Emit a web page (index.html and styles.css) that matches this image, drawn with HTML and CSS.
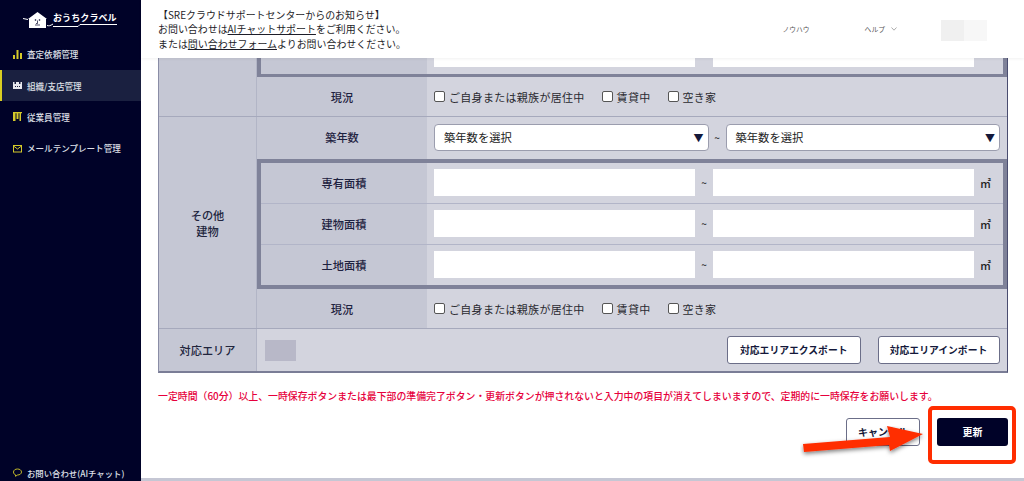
FILE: index.html
```html
<!DOCTYPE html>
<html lang="ja">
<head>
<meta charset="utf-8">
<title>組織/支店管理</title>
<link rel="stylesheet" href="styles.css">
</head>
<body>
<div class="app">
  <aside class="sidebar">
    <div class="logo">
      <svg class="logo-house" width="31" height="18" viewBox="0 0 31 18"><path d="M0 7.500 5 8.500M24 14.500C26 15 27 15 30 13" stroke="#fff" stroke-width="1" fill="none"/><path d="M5 8 14.500 1 24 8H23V17H6V8z" fill="#fff"/><circle cx="12.500" cy="9" r=".8" fill="#000228"/><circle cx="16.500" cy="9" r=".8" fill="#000228"/><path d="M14.500 9.500V12.500H13M12 14H17" stroke="#000228" stroke-width=".7" fill="none"/></svg>
      <div class="logo-word">
        <span class="logo-text">おうちクラベル</span>
        <svg class="logo-line" width="64" height="4" viewBox="0 0 64 4"><path d="M0 3.500H25L27 1.500H64" stroke="#fff" stroke-width="1" fill="none"/></svg>
      </div>
    </div>
    <nav class="nav">
      <a class="nav-item"><svg class="nav-icon" width="9" height="9" viewBox="0 0 9 9"><path d="M0 5h2v4H0zM3.500 0h2v9h-2zM7 3h2v6H7z" fill="#d4c92a"/></svg>査定依頼管理</a>
      <a class="nav-item active"><svg class="nav-icon" width="9" height="9" viewBox="0 0 9 9"><path d="M0 1h1.500v2H3V1h3v2h1.500V1H9v7H0z" fill="#e8e8ee"/><path d="M2 5h1v1H2zM4 5h1v1H4zM6 5h1v1H6z" fill="#1a2040"/></svg>組織/支店管理</a>
      <a class="nav-item"><svg class="nav-icon" width="9" height="9" viewBox="0 0 9 9"><path d="M0 0h9v1.200H8V9H6.500V1.200h-1V7H3.500V1.200h-1V9H0z" fill="#d4c92a"/></svg>従業員管理</a>
      <a class="nav-item"><svg class="nav-icon" width="9" height="9" viewBox="0 0 9 9"><rect x=".5" y="1.500" width="8" height="6.500" fill="none" stroke="#d4c92a"/><path d="M.5 2 4.500 5 8.500 2" fill="none" stroke="#d4c92a"/></svg>メールテンプレート管理</a>
    </nav>
    <a class="nav-chat"><svg class="nav-icon" width="9" height="9" viewBox="0 0 9 9"><path d="M4.500 1C2.300 1 .5 2.200 .5 4s1 2.500 2 2.800L2.500 8.300 4.500 7c2.200 0 4-1.200 4-3S6.700 1 4.500 1z" fill="none" stroke="#d4c92a" stroke-width=".9"/></svg>お問い合わせ(AIチャット)</a>
  </aside>

  <div class="content">
    <header class="topbar">
      <div class="notice">
        <p>【SREクラウドサポートセンターからのお知らせ】</p>
        <p>お問い合わせは<u>AIチャットサポート</u>をご利用ください。</p>
        <p>または<u>問い合わせフォーム</u>よりお問い合わせください。</p>
      </div>
      <div class="topnav">
        <span class="topnav-know">ノウハウ</span>
        <span class="topnav-help">ヘルプ<svg width="6" height="4" viewBox="0 0 6 4"><path d="M.5.500 3 3.200 5.500.500" fill="none" stroke="#888" stroke-width=".7"/></svg></span>
        <span class="blur-user"></span>
      </div>
    </header>

    <main class="main">
      <div class="table">
        <section class="group">
          <div class="group-head"></div>
          <div class="group-body">
            <div class="nest nest-cut">
              <div class="row row-cut"><div class="label"></div><div class="value"><span class="field"></span><span class="tilde"></span><span class="field"></span><span class="unit"></span></div></div>
            </div>
            <div class="row row-status">
              <div class="label">現況</div>
              <div class="value checks">
                <label class="check"><i class="box"></i>ご自身または親族が居住中</label>
                <label class="check"><i class="box"></i>賃貸中</label>
                <label class="check"><i class="box"></i>空き家</label>
              </div>
            </div>
          </div>
        </section>

        <section class="group">
          <div class="group-head">その他<br>建物</div>
          <div class="group-body">
            <div class="row row-age">
              <div class="label">築年数</div>
              <div class="value selects">
                <div class="select">築年数を選択<span class="caret">▼</span></div>
                <span class="tilde-s">~</span>
                <div class="select">築年数を選択<span class="caret">▼</span></div>
              </div>
            </div>
            <div class="nest">
              <div class="row row-area">
                <div class="label">専有面積</div>
                <div class="value"><span class="field"></span><span class="tilde">~</span><span class="field"></span><span class="unit">㎡</span></div>
              </div>
              <div class="row row-area">
                <div class="label">建物面積</div>
                <div class="value"><span class="field"></span><span class="tilde">~</span><span class="field"></span><span class="unit">㎡</span></div>
              </div>
              <div class="row row-area">
                <div class="label">土地面積</div>
                <div class="value"><span class="field"></span><span class="tilde">~</span><span class="field"></span><span class="unit">㎡</span></div>
              </div>
            </div>
            <div class="row row-status2">
              <div class="label">現況</div>
              <div class="value checks">
                <label class="check"><i class="box"></i>ご自身または親族が居住中</label>
                <label class="check"><i class="box"></i>賃貸中</label>
                <label class="check"><i class="box"></i>空き家</label>
              </div>
            </div>
          </div>
        </section>

        <section class="area-row">
          <div class="group-head">対応エリア</div>
          <div class="area-value">
            <span class="blur-area"></span>
            <div class="area-actions">
              <button class="btn-outline">対応エリアエクスポート</button>
              <button class="btn-outline">対応エリアインポート</button>
            </div>
          </div>
        </section>
      </div>

      <p class="warning">一定時間（60分）以上、一時保存ボタンまたは最下部の準備完了ボタン・更新ボタンが押されないと入力中の項目が消えてしまいますので、定期的に一時保存をお願いします。</p>

      <div class="actions">
        <button class="btn-action btn-cancel">キャンセル</button>
        <button class="btn-action btn-update">更新</button>
      </div>
    </main>
    <div class="foot-line"></div>
  </div>

  <div class="callout-box"></div>
  <svg class="callout-arrow" width="130" height="40" viewBox="0 0 130 40"><defs><filter id="s" x="-10%" y="-20%" width="120%" height="160%"><feDropShadow dx="0" dy="2" stdDeviation="2" flood-color="#000" flood-opacity=".5"/></filter></defs><path d="M3 18 90 11 87 0 123 8 90 25 89 19 4 26z" fill="#ff2d00" filter="url(#s)"/></svg>
</div>
</body>
</html>
```

FILE: styles.css
```css
* { box-sizing: border-box; }
html, body { margin: 0; padding: 0; height: 481px; overflow: hidden; background: #fff; }
body { font-family: "Noto Sans CJK JP", "Noto Sans", sans-serif; color: #14183a; }
p { margin: 0; }
.app { position: relative; display: flex; width: 1024px; height: 481px; overflow: hidden; }

/* sidebar */
.sidebar { width: 141px; flex: none; background: #000228; color: #dfe0e8; display: flex; flex-direction: column; }
.logo { display: flex; align-items: flex-start; height: 38.750px; padding: 11px 0 0 23px; }
.logo-word { display: flex; flex-direction: column; margin-top: 2px; margin-left: -1px; }
.logo-text { font-size: 9px; line-height: 10px; font-weight: 700; color: #fff; letter-spacing: .1px; }
.logo-line { display: block; margin-top: 0; }
.nav { display: flex; flex-direction: column; }
.nav-item { height: 31.250px; display: flex; align-items: center; gap: 5px; padding-left: 13px; font-size: 8.550px; font-weight: 500; }
.nav-item.active { background: #1a2040; border-left: 2px solid #d9cd22; padding-left: 11px; }
.nav-icon { flex: none; }
.nav-chat { margin-top: auto; height: 17px; display: flex; align-items: center; gap: 5px; padding-left: 13px; font-size: 8.400px; font-weight: 500; }

/* top */
.content { flex: 1; min-width: 0; display: flex; flex-direction: column; }
.topbar { height: 58px; flex: none; background: #fff; display: flex; justify-content: space-between; position: relative; z-index: 2; box-shadow: 0 1px 3px rgba(0,0,0,.06); }
.notice { padding: 7.500px 0 0 17px; font-size: 9.950px; line-height: 14.700px; color: #1d1d28; }
.topnav { display: flex; align-items: flex-start; padding: 20px 37px 0 0; font-size: 6.800px; color: #555; }
.topnav-know { line-height: 18px; margin-right: 55px; }
.topnav-help { line-height: 18px; margin-right: 44px; display: flex; align-items: center; gap: 6px; }
.blur-user { width: 46px; height: 21px; background: linear-gradient(90deg, #f0f0f0 50%, #f7f7f7 50%); }

/* table */
.main { flex: 1; min-height: 0; padding-left: 17px; }
.table { width: 849.500px; border-left: 1px solid #8a8da6; border-right: 1px solid #4a4d70; border-bottom: 2px solid #7a7d96; }
.group { display: flex; border-bottom: 1.500px solid #a6a9bc; }
.group-head { width: 98px; flex: none; background: #c5c7d4; border-right: 1px solid #b2b5c6; display: flex; align-items: center; justify-content: center; text-align: center; font-size: 11.200px; line-height: 16px; font-weight: 500; color: #22253d; }
.group-body { flex: 1; min-width: 0; }
.row { display: flex; }
.label { width: 170px; flex: none; background: #c5c7d4; display: flex; align-items: center; justify-content: center; font-size: 11.200px; font-weight: 500; color: #1e2240; }
.value { flex: 1; min-width: 0; background: #d3d4de; display: flex; align-items: center; padding-left: 7px; font-size: 11px; }
.nest { border: 4px solid #7f8299; }
.nest .label { width: 166px; }
.nest-cut { border-top: 0; border-bottom-width: 3.500px; }
.row-cut { height: 16px; }
.row-cut .value { align-items: flex-start; }
.row-cut .field { height: 9px; }
.row-status { height: 39px; }
.row-age { height: 41.500px; }
.row-age .label { padding-bottom: 2.500px; }
.row-age .value { padding-bottom: 1.500px; }
.row-status2 { height: 39px; }
.row-area { height: 41px; border-bottom: 1px solid #b2b5c8; }
.row-area:last-child { height: 40.500px; border-bottom: 0; }
.field { width: 261px; height: 27px; background: #fff; flex: none; }
.tilde { width: 18px; text-align: center; font-size: 10px; font-weight: 500; flex: none; color: #222; }
.unit { margin-left: 6px; font-size: 11px; font-weight: 500; color: #222; }
.checks { gap: 17px; font-size: 11px; color: #2a2a30; }
.check { display: flex; align-items: center; gap: 4px; letter-spacing: .3px; }
.box { width: 11px; height: 11px; border: 1px solid #555; border-radius: 2px; background: #fff; flex: none; }
.select { width: 274.500px; height: 27px; background: #fff; border: 1px solid #9b9dae; border-radius: 4px; display: flex; align-items: center; justify-content: space-between; padding: 0 4px 0 9px; font-size: 11.300px; color: #222; }
.caret { font-size: 10px; color: #14183a; }
.tilde-s { width: 17px; text-align: center; font-size: 10px; font-weight: 500; color: #222; }

.area-row { display: flex; height: 42px; }
.area-value { flex: 1; background: #d3d4de; display: flex; align-items: center; justify-content: space-between; padding: 0 7px 0 8px; }
.blur-area { width: 31px; height: 21px; background: #b8b8c8; }
.area-actions { display: flex; gap: 17px; }
.btn-outline { height: 28px; padding: 0; background: #fff; border: 1px solid #6b6e88; border-radius: 3px; font-family: inherit; font-size: 9.800px; font-weight: 700; color: #14183a; }
.btn-outline:first-child { width: 133.500px; }
.btn-outline:last-child { width: 122px; }

.warning { margin-top: 16.500px; font-size: 9.880px; line-height: 12px; font-weight: 500; color: #e6003c; white-space: nowrap; }
.actions { display: flex; justify-content: flex-end; gap: 17px; margin-top: 16px; width: 850px; }
.btn-action { height: 28px; border-radius: 3px; font-family: inherit; font-size: 10px; font-weight: 700; padding: 0; }
.btn-cancel { width: 74px; background: #fff; border: 1px solid #6b6e88; color: #14183a; }
.btn-update { width: 71px; background: #000228; border: 0; color: #fff; }
.foot-line { height: 3px; flex: none; background: #c5c7d4; }

/* annotations */
.callout-box { position: absolute; left: 927.500px; top: 406px; width: 88px; height: 57.500px; border: 4px solid #ff2d00; border-radius: 5px; }
.callout-arrow { position: absolute; left: 800px; top: 426px; }
```
